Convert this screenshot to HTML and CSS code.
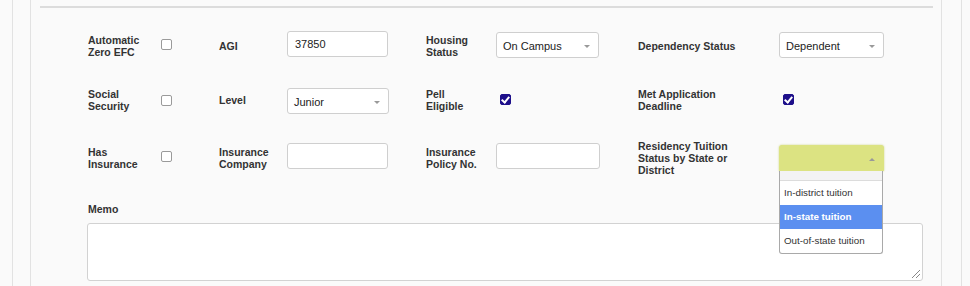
FILE: index.html
```html
<!DOCTYPE html>
<html lang="en">
<head>
    <meta charset="UTF-8">
    <title>Financial Aid</title>
    <link rel="stylesheet" href="styles.css">
</head>
<body>
    <div class="outer">
        <div class="panel">
            <hr class="rule">
            <div class="form">
                <div class="grid">
                    <label class="lbl short">Automatic Zero EFC</label>
                    <div class="ctl"><span class="check"></span></div>
                    <label class="lbl">AGI</label>
                    <div class="ctl"><div class="input">37850</div></div>
                    <label class="lbl short">Housing Status</label>
                    <div class="ctl"><div class="select wide">On Campus<span class="arrow"></span></div></div>
                    <label class="lbl long">Dependency Status</label>
                    <div class="ctl"><div class="select wider">Dependent<span class="arrow"></span></div></div>

                    <label class="lbl short flat">Social Security</label>
                    <div class="ctl"><span class="check"></span></div>
                    <label class="lbl flat">Level</label>
                    <div class="ctl"><div class="select">Junior<span class="arrow"></span></div></div>
                    <label class="lbl short flat">Pell Eligible</label>
                    <div class="ctl"><span class="check checked"></span></div>
                    <label class="lbl long flat">Met Application Deadline</label>
                    <div class="ctl"><span class="check checked"></span></div>

                    <label class="lbl short">Has Insurance</label>
                    <div class="ctl"><span class="check"></span></div>
                    <label class="lbl">Insurance Company</label>
                    <div class="ctl"><div class="input"></div></div>
                    <label class="lbl short">Insurance Policy No.</label>
                    <div class="ctl"><div class="input wide"></div></div>
                    <label class="lbl long">Residency Tuition Status by State or District</label>
                    <div class="ctl">
                        <div class="dropdown">
                            <div class="select wider open"><span class="arrow up"></span></div>
                            <ul class="options">
                                <li class="blank"></li>
                                <li>In-district tuition</li>
                                <li class="active">In-state tuition</li>
                                <li>Out-of-state tuition</li>
                            </ul>
                        </div>
                    </div>
                </div>

                <label class="lbl memo-lbl">Memo</label>
                <div class="memo"><span class="grip"></span></div>
            </div>
        </div>
    </div>
</body>
</html>
```

FILE: styles.css
```css
body {
    margin: 0;
    background-color: #fafafa;
    font-family: "Liberation Sans", Arial, sans-serif;
    color: #333;
    height: 286px;
    overflow: hidden;
}

.outer {
    margin: 0 8px 0 12px;
    border-left: 1px solid #e2e2e2;
    border-right: 1px solid #e2e2e2;
    padding: 0 19px 0 17px;
    height: 286px;
    box-sizing: border-box;
}

.panel {
    border-left: 1px solid #e2e2e2;
    border-right: 1px solid #e2e2e2;
    height: 100%;
    padding-top: 6px;
    box-sizing: border-box;
}

.rule {
    margin: 0 8px 0 9px;
    border: none;
    height: 2px;
    background: #dcdcdc;
}

.form {
    padding: 0 18px 0 57px;
}

.grid {
    display: grid;
    grid-template-columns: 73px 58px 68px 139px 70px 142px 141px 1fr;
    grid-auto-rows: 36px;
    row-gap: 20px;
    align-items: center;
    margin-top: 18px;
}

.lbl {
    font-size: 10.5px;
    font-weight: bold;
    line-height: 12px;
    color: #333;
}

.grid .lbl {
    padding-top: 4px;
}

.grid .lbl.flat {
    padding-top: 0;
}

.lbl.short {
    max-width: 56px;
}

.lbl.long {
    max-width: 108px;
}

.ctl {
    display: flex;
    align-items: center;
}

.check {
    display: inline-block;
    width: 9px;
    height: 9px;
    border: 1px solid #9a9a9a;
    border-radius: 2px;
    background: #fff;
    position: relative;
    margin-top: 1px;
}

.check.checked {
    background: #1d0f8a;
    border-color: #1d0f8a;
    margin-left: 4px;
    margin-top: -1px;
}

.check.checked::after {
    content: "";
    position: absolute;
    left: 2px;
    top: 0;
    width: 3px;
    height: 6px;
    border: solid #fff;
    border-width: 0 2px 2px 0;
    transform: rotate(40deg);
}

.input,
.select {
    height: 24px;
    border: 1px solid #cfcfcf;
    border-radius: 3px;
    background: #fff;
    box-sizing: content-box;
    font-size: 11px;
    line-height: 24px;
    padding: 0 0 0 7px;
    color: #222;
    position: relative;
}

.input {
    width: 92px;
}

.input.wide {
    width: 95px;
}

.select {
    width: 94px;
    margin-top: 2px;
    line-height: 27px;
    padding-left: 6px;
}

.select.wide {
    width: 95px;
}

.select.wider {
    width: 97px;
}

.arrow {
    position: absolute;
    right: 8px;
    top: 12px;
    border-left: 3px solid transparent;
    border-right: 3px solid transparent;
    border-top: 3px solid #999;
}

.arrow.up {
    border-top: none;
    border-bottom: 3px solid #999;
}

.dropdown {
    position: relative;
}

.select.open {
    background: #dce382;
    border-color: #dce382;
    border-radius: 3px 3px 0 0;
    box-shadow: 0 0 2px #c9d27a;
    margin-top: 4px;
}

.options {
    position: absolute;
    left: 0;
    top: 30px;
    width: 102px;
    margin: 0;
    padding: 0;
    list-style: none;
    background: #fff;
    border: 1px solid #a9a9a9;
    border-top: none;
    border-radius: 0 0 3px 3px;
    font-size: 9.8px;
    color: #333;
    z-index: 2;
}

.options li {
    height: 24px;
    line-height: 24px;
    padding-left: 4px;
}

.options li.blank {
    height: 9px;
    background: #f3f3f3;
    border-bottom: 1px solid #dcdcdc;
}

.options li.active {
    background: #5b8ff0;
    color: #fff;
    font-weight: bold;
}

.memo-lbl {
    display: block;
    margin-top: 29px;
}

.memo {
    margin-top: 8px;
    margin-left: -1px;
    height: 56px;
    border: 1px solid #d2d2d2;
    border-radius: 3px;
    background: #fff;
    position: relative;
}

.grip {
    position: absolute;
    right: 2px;
    bottom: 2px;
    width: 8px;
    height: 8px;
    background: linear-gradient(135deg, transparent 45%, #888 45%, #888 55%, transparent 55%, transparent 70%, #888 70%, #888 80%, transparent 80%);
}
```
